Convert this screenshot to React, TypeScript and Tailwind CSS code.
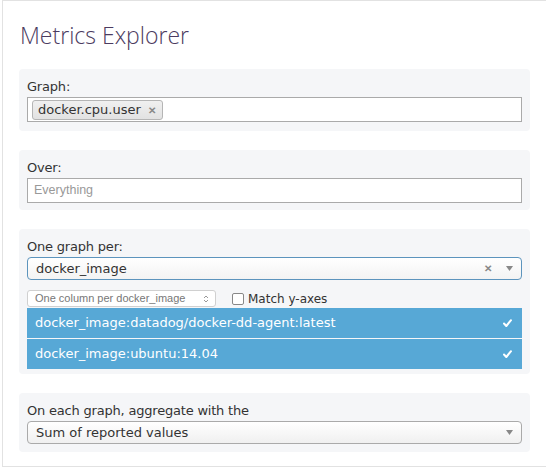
import React from "react";

const labelCls =
  "h-[16px] leading-[16px] text-[13px] text-[#333] mb-[2px] font-['DejaVu_Sans',sans-serif] tracking-[-0.2px]";

function Panel({ children, className = "" }: { children: React.ReactNode; className?: string }) {
  return (
    <div className={`w-[511px] rounded-[4px] bg-[#f5f6f8] pl-[8px] pr-[8px] pt-[10px] ${className}`}>
      {children}
    </div>
  );
}

function Check() {
  return (
    <svg width="9" height="8" viewBox="0 0 9 8" className="shrink-0">
      <path d="M1 4.5 L3.3 7 L8 1.2" stroke="white" strokeWidth="2" fill="none" strokeLinecap="round" strokeLinejoin="round" />
    </svg>
  );
}

function Caret() {
  return (
    <svg width="7" height="5" viewBox="0 0 7 5">
      <path d="M0 0 L7 0 L3.5 5 Z" fill="#888" />
    </svg>
  );
}

export default function App() {
  return (
    <div className="w-[546px] h-[473px] bg-white overflow-hidden">
      <div className="ml-[2px] h-[467px] border-l border-t border-b border-[#e2e2e2] pl-[16px]">
        <div className="pt-[18px] h-[50px] pl-[1px] text-[23px] leading-[32px] font-light text-[#4b3b60] font-['Open_Sans',sans-serif]">
          Metrics Explorer
        </div>

        <div className="mt-[18px] flex flex-col gap-[19px]">
          <Panel className="h-[62px]">
            <div className={labelCls}>Graph:</div>
            <div className="h-[25px] border border-[#aaa] bg-white flex items-center pl-[4px]">
              <div className="h-[20px] flex items-center gap-[7px] rounded-[3px] border border-[#b5b5b5] bg-gradient-to-b from-[#f0f0f0] to-[#e2e2e2] pl-[5px] pr-[6px]">
                <span className="text-[13px] text-[#333] font-['DejaVu_Sans',sans-serif] leading-none">docker.cpu.user</span>
                <span className="text-[10px] font-bold text-[#888] leading-none">✕</span>
              </div>
            </div>
          </Panel>

          <Panel className="h-[60px]">
            <div className={labelCls}>Over:</div>
            <div className="h-[25px] border border-[#aaa] bg-white flex items-center pl-[6px] text-[12.5px] text-[#999] font-['Liberation_Sans',sans-serif]">
              Everything
            </div>
          </Panel>

          <Panel className="h-[145px]">
            <div className={labelCls}>One graph per:</div>
            <div className="h-[23px] rounded-[4px] border border-[#5c94bd] bg-gradient-to-b from-white to-[#f3f3f3] flex items-center pl-[8px] pr-[8px]">
              <span className="flex-1 text-[13px] text-[#333] font-['DejaVu_Sans',sans-serif]">docker_image</span>
              <span className="text-[10px] font-bold text-[#888] mr-[14px]">✕</span>
              <Caret />
            </div>
            <div className="mt-[10px] h-[17px] flex items-center">
              <div className="w-[189px] h-[17px] rounded-[3px] border border-[#d0d0d0] bg-white flex items-center pl-[7px] pr-[6px]">
                <span className="flex-1 text-[11px] text-[#777] font-['Liberation_Sans',sans-serif]">One column per docker_image</span>
                <svg width="6" height="10" viewBox="0 0 6 10">
                  <path d="M1 4 L3 2 L5 4 M1 6 L3 8 L5 6" stroke="#999" strokeWidth="1" fill="none" />
                </svg>
              </div>
              <div className="ml-[16px] w-[12px] h-[12px] rounded-[2px] border border-[#888] bg-white" />
              <span className="ml-[4px] text-[12px] text-[#333] font-['DejaVu_Sans',sans-serif]">Match y-axes</span>
            </div>
            <div className="mt-[1px] flex flex-col gap-[1px]">
              <div className="h-[30px] bg-[#57a8d6] flex items-center pl-[8px] pr-[10px]">
                <span className="flex-1 text-[13px] text-white font-['DejaVu_Sans',sans-serif]">docker_image:datadog/docker-dd-agent:latest</span>
                <Check />
              </div>
              <div className="h-[30px] bg-[#57a8d6] flex items-center pl-[8px] pr-[10px]">
                <span className="flex-1 text-[13px] text-white font-['DejaVu_Sans',sans-serif]">docker_image:ubuntu:14.04</span>
                <Check />
              </div>
            </div>
          </Panel>

          <Panel className="h-[59px]">
            <div className={labelCls}>On each graph, aggregate with the</div>
            <div className="h-[23px] rounded-[4px] border border-[#aaa] bg-gradient-to-b from-white to-[#f0f0f0] flex items-center pl-[8px] pr-[8px]">
              <span className="flex-1 text-[13px] text-[#333] font-['DejaVu_Sans',sans-serif]">Sum of reported values</span>
              <Caret />
            </div>
          </Panel>
        </div>
      </div>
    </div>
  );
}
